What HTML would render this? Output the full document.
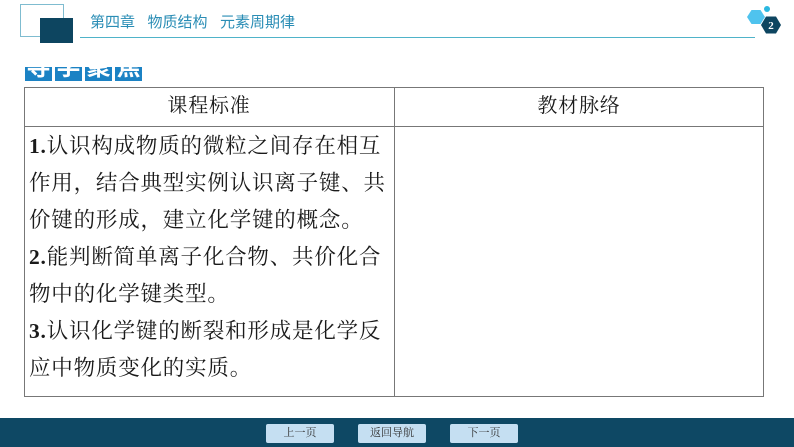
<!DOCTYPE html><html><head><meta charset="utf-8"><style>
body{margin:0;width:794px;height:447px;background:#fff;position:relative;overflow:hidden;font-family:"Liberation Serif","Noto Serif CJK SC",serif}
.a{position:absolute}
.t{color:#1a1a1a;font-size:21.5px;letter-spacing:0.8px;line-height:37px;white-space:nowrap}
.btn{position:absolute;top:424px;width:68px;height:19px;background:#c5dff2;border-radius:2px;font-size:11px;line-height:19px;text-align:center;color:#333}
.k{width:27px;height:26px;background:#1b82c4;color:#fff;font-size:24px;line-height:20px;text-align:center;font-weight:bold;font-family:'Noto Sans CJK SC',sans-serif;margin-top:-12px}
</style></head><body>
<div class="a" style="left:20px;top:4px;width:42px;height:31px;border:1px solid #7fbcd0"></div>
<div class="a" style="left:40px;top:18px;width:33px;height:25px;background:#0d4560"></div>
<div class="a" style="left:80px;top:37px;width:675px;height:1px;background:#4fb3c9"></div>
<div class="a" style="left:90px;top:11px;font-family:'Liberation Sans','Noto Sans CJK SC',sans-serif;font-size:15px;color:#2a8db5;white-space:nowrap">第四章&nbsp;&nbsp;&nbsp;物质结构&nbsp;&nbsp;&nbsp;元素周期律</div>
<svg class="a" style="left:744px;top:2px" width="42" height="38" viewBox="0 0 42 38">
<polygon points="3,15 7.5,8 16.5,8 21,15 16.5,22 7.5,22" fill="#4fc3ee"/>
<circle cx="23" cy="7" r="3" fill="#2bb8e0"/>
<polygon points="17,23 22,14.5 32,14.5 37,23 32,31.5 22,31.5" fill="#0d4560"/>
<text x="27" y="27" font-size="11" fill="#fff" text-anchor="middle" font-weight="bold" font-family="Liberation Serif">2</text>
</svg>
<div class="a" style="left:25px;top:67px;height:14px;overflow:hidden;display:flex;gap:3px">
<div class="k">导</div><div class="k">学</div><div class="k">聚</div><div class="k">焦</div>
</div>
<div class="a" style="left:24px;top:87px;width:738px;height:308px;border:1px solid #777"></div>
<div class="a" style="left:394px;top:87px;width:1px;height:310px;background:#777"></div>
<div class="a" style="left:24px;top:126px;width:740px;height:1px;background:#777"></div>
<div class="a t" style="left:24px;top:88px;width:370px;text-align:center;line-height:37px;font-size:20px">课程标准</div>
<div class="a t" style="left:395px;top:88px;width:368px;text-align:center;line-height:37px;font-size:20px">教材脉络</div>
<div class="a t" style="left:29px;top:128px">
<b>1.</b>认识构成物质的微粒之间存在相互<br>作用，结合典型实例认识离子键、共<br>价键的形成，建立化学键的概念。<br><b>2.</b>能判断简单离子化合物、共价化合<br>物中的化学键类型。<br><b>3.</b>认识化学键的断裂和形成是化学反<br>应中物质变化的实质。</div>
<div class="a" style="left:0;top:418px;width:794px;height:29px;background:#0e4864"></div>
<div class="btn" style="left:266px">上一页</div>
<div class="btn" style="left:358px">返回导航</div>
<div class="btn" style="left:450px">下一页</div>
</body></html>
